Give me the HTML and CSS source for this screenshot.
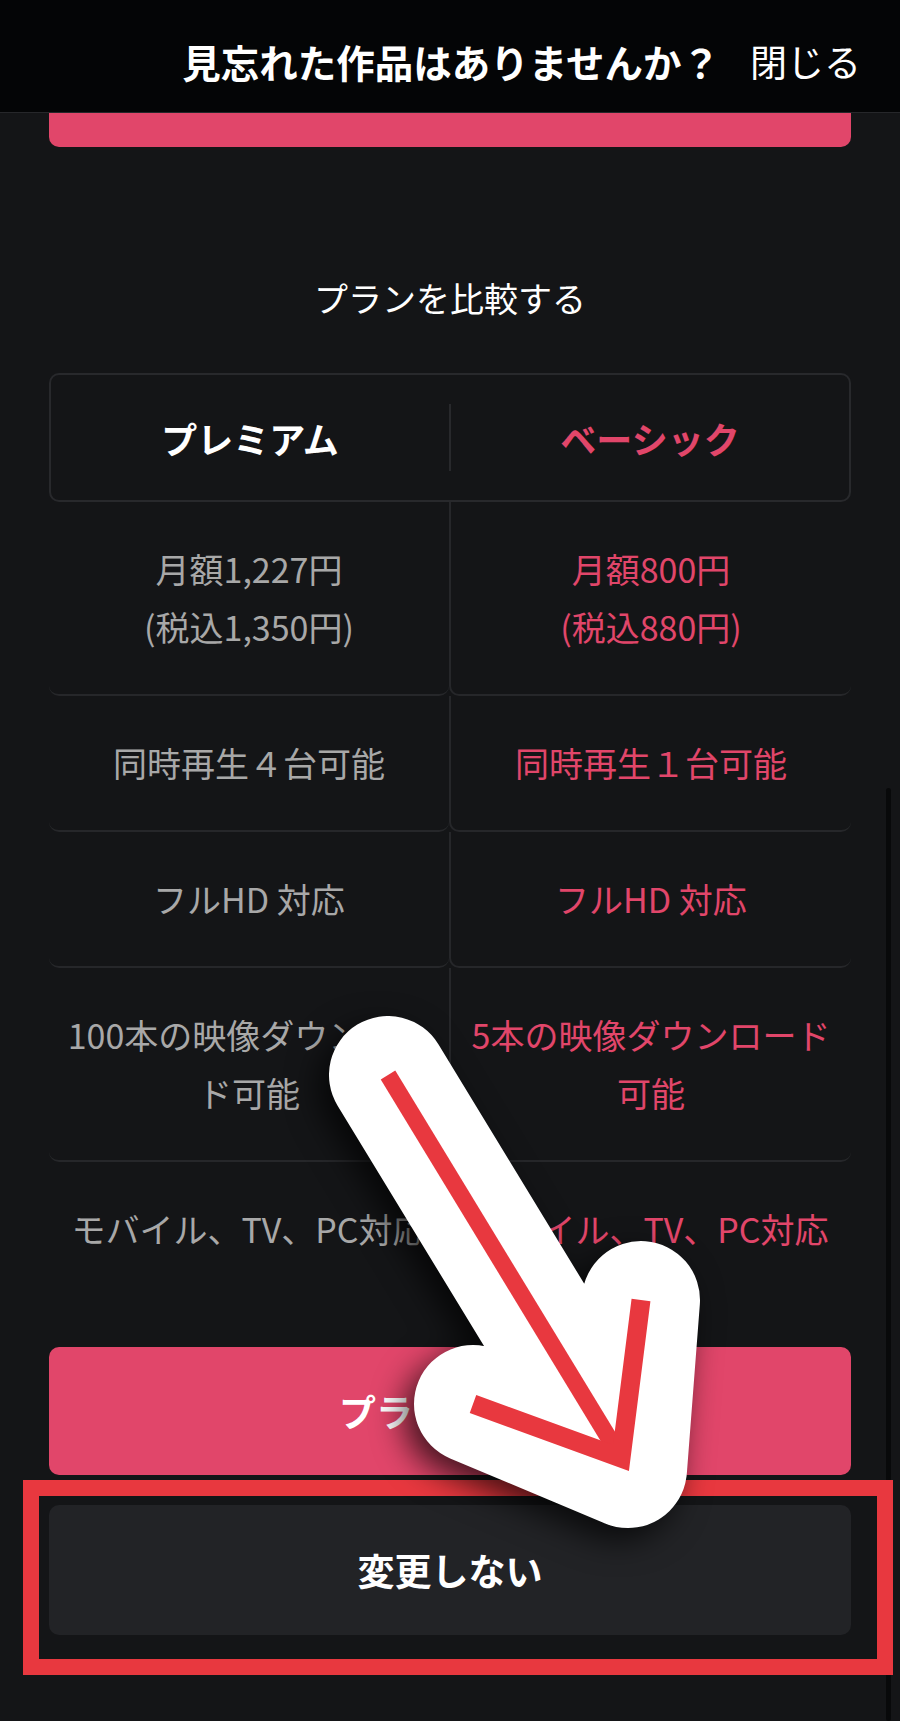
FILE: index.html
```html
<!DOCTYPE html>
<html lang="ja">
<head>
<meta charset="utf-8">
<title>プランを比較する</title>
<link rel="stylesheet" href="styles.css">
</head>
<body>
<div class="page">
  <header class="topbar">
    <span class="topbar-title">見忘れた作品はありませんか？</span>
    <span class="topbar-close">閉じる</span>
  </header>
  <main class="content">
    <div class="prev-button"></div>
    <h2 class="compare-title">プランを比較する</h2>
    <div class="plan-head">
      <div class="plan-name premium">プレミアム</div>
      <div class="plan-divider"></div>
      <div class="plan-name basic">ベーシック</div>
    </div>
    <div class="plan-table">
      <div class="plan-row">
        <div class="cell cell-left">月額1,227円<br>(税込1,350円)</div>
        <div class="cell cell-right">月額800円<br>(税込880円)</div>
      </div>
      <div class="plan-row">
        <div class="cell cell-left">同時再生４台可能</div>
        <div class="cell cell-right">同時再生１台可能</div>
      </div>
      <div class="plan-row">
        <div class="cell cell-left">フルHD 対応</div>
        <div class="cell cell-right">フルHD 対応</div>
      </div>
      <div class="plan-row">
        <div class="cell cell-left">100本の映像ダウンロード可能</div>
        <div class="cell cell-right">5本の映像ダウンロード可能</div>
      </div>
      <div class="plan-row last">
        <div class="cell cell-left">モバイル、TV、PC対応</div>
        <div class="cell cell-right">モバイル、TV、PC対応</div>
      </div>
    </div>
    <button class="btn btn-primary">プランを変更</button>
    <button class="btn btn-secondary">変更しない</button>
  </main>
  <div class="scroll-indicator"></div>
  <div class="highlight-box"></div>
  <svg class="arrow" viewBox="0 0 900 1721" width="900" height="1721" aria-hidden="true">
    <path class="arrow-outline" d="M388 1075 L628 1469 M473 1404 L628 1469 L641 1300"/>
    <path class="arrow-line" d="M388 1075 L621 1458"/>
    <path class="arrow-head" d="M473 1404 L621 1458 L641 1300"/>
  </svg>
</div>
</body>
</html>
```
FILE: styles.css
```css
* { box-sizing: border-box; }
html, body {
  margin: 0;
  padding: 0;
  background: #141517;
}
body {
  font-family: "Noto Sans CJK JP", "Noto Sans", sans-serif;
  color: #ffffff;
}
.page {
  position: relative;
  width: 900px;
  height: 1721px;
  overflow: hidden;
  background: #141517;
}
.topbar {
  height: 113px;
  background: #040506;
  border-bottom: 1px solid #26272a;
  display: flex;
  justify-content: flex-end;
  align-items: center;
  padding: 11px 39px 0 0;
  gap: 30px;
}
.topbar-title {
  font-size: 38.5px;
  font-weight: 700;
  line-height: 1;
}
.topbar-close {
  font-size: 37px;
  font-weight: 400;
  line-height: 1;
}
.content {
  padding: 0 49px;
}
.prev-button {
  height: 34px;
  background: #e1466a;
  border-radius: 0 0 10px 10px;
}
.compare-title {
  margin: 126px 0 50px;
  font-size: 34px;
  font-weight: 400;
  line-height: 50px;
  text-align: center;
}
.plan-head {
  height: 129px;
  border: 2px solid #28292c;
  border-radius: 10px;
  display: flex;
  align-items: center;
}
.plan-name {
  flex: 1;
  text-align: center;
  font-size: 36px;
  font-weight: 700;
  line-height: 1;
}
.plan-name.premium { color: #ffffff; }
.plan-name.basic { color: #e1466a; }
.plan-divider {
  width: 2px;
  height: 67px;
  background: #28292c;
}
.plan-row {
  display: grid;
  grid-template-columns: 400px 1fr;
}
.cell {
  padding: 38px 10px;
  font-size: 34px;
  line-height: 58px;
  text-align: center;
  border-bottom: 2px solid #26272a;
  border-radius: 0 0 10px 10px;
}
.cell-left { color: #a8a8a8; }
.cell-right {
  color: #e1466a;
  border-left: 2px solid #26272a;
}
.plan-row.last .cell { border-bottom: none; }
.btn {
  display: block;
  width: 100%;
  border: none;
  border-radius: 10px;
  font-family: "Noto Sans CJK JP", "Noto Sans", sans-serif;
  font-size: 37px;
  font-weight: 700;
  color: #ffffff;
}
.btn-primary {
  margin-top: 51px;
  height: 128px;
  background: #e1466a;
}
.btn-secondary {
  margin-top: 30px;
  height: 130px;
  background: #222326;
}
.scroll-indicator {
  position: absolute;
  left: 886px;
  top: 788px;
  width: 5px;
  height: 933px;
  border-radius: 3px;
  background: #08090a;
}
.highlight-box {
  position: absolute;
  left: 23px;
  top: 1480px;
  width: 870px;
  height: 195px;
  border: 16px solid #e8383f;
}
.arrow {
  position: absolute;
  left: 0;
  top: 0;
  pointer-events: none;
  filter: drop-shadow(-10px 12px 16px rgba(0, 0, 0, 0.7));
}
.arrow-outline {
  fill: none;
  stroke: #ffffff;
  stroke-width: 118;
  stroke-linecap: round;
  stroke-linejoin: round;
}
.arrow-line,
.arrow-head {
  fill: none;
  stroke: #e8383f;
  stroke-width: 17;
  stroke-linecap: butt;
  stroke-linejoin: miter;
  stroke-miterlimit: 10;
}
.arrow-head {
  stroke-width: 19;
}
```
